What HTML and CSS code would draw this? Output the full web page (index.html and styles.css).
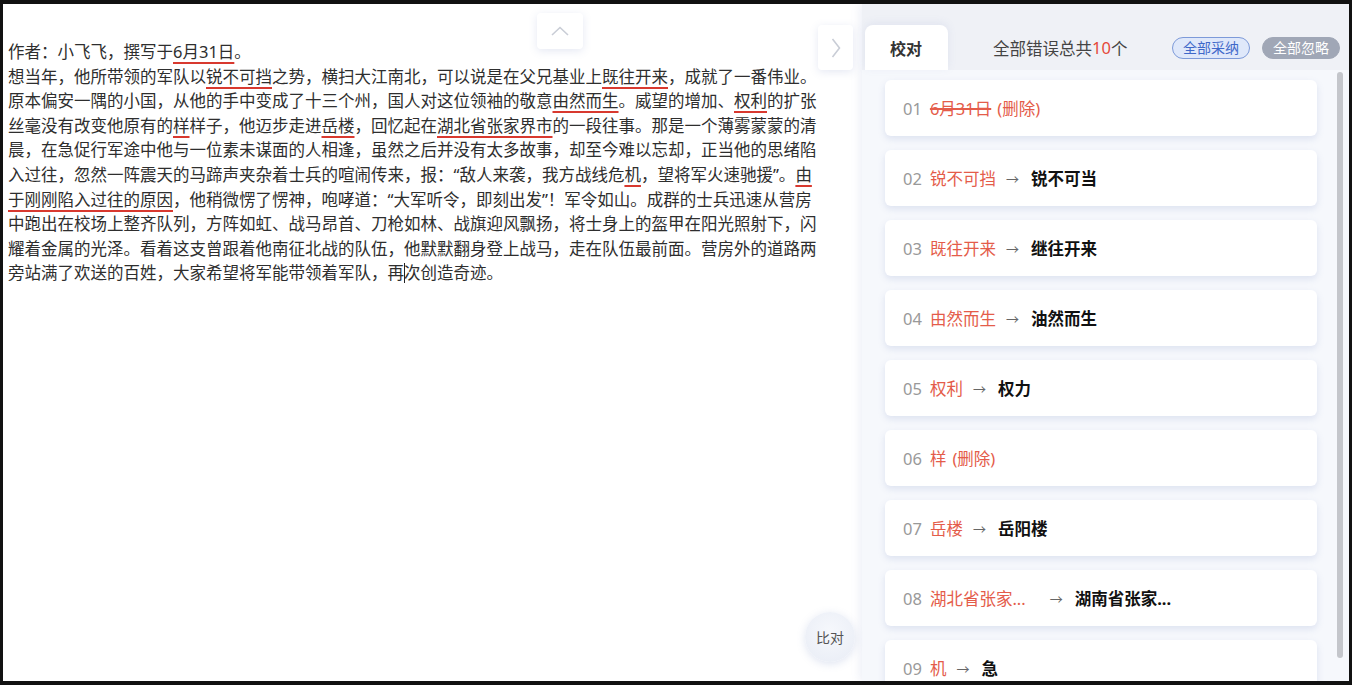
FILE: index.html
```html
<!DOCTYPE html>
<html lang="zh-CN">
<head>
<meta charset="utf-8">
<title>校对</title>
<link rel="stylesheet" href="styles.css">
</head>
<body>
<div class="frame">
  <section class="editor">
    <p class="doc">作者：小飞飞，撰写于<span class="err-u">6月31日</span>。<br>想当年，他所带领的军队以<span class="err-u">锐不可挡</span>之势，横扫大江南北，可以说是在父兄基业上<span class="err-u">既往开来</span>，成就了一番伟业。原本偏安一隅的小国，从他的手中变成了十三个州，国人对这位领袖的敬意<span class="err-u">由然而生</span>。威望的增加、<span class="err-u">权利</span>的扩张丝毫没有改变他原有的<span class="err-u">样</span>样子，他迈步走进<span class="err-u">岳楼</span>，回忆起在<span class="err-u">湖北省张家界市</span>的一段往事。那是一个薄雾蒙蒙的清晨，在急促行军途中他与一位素未谋面的人相逢，虽然之后并没有太多故事，却至今难以忘却，正当他的思绪陷入过往，忽然一阵震天的马蹄声夹杂着士兵的喧闹传来，报：“敌人来袭，我方战线危<span class="err-u">机</span>，望将军火速驰援”。<span class="err-u">由于刚刚陷入过往的原因</span>，他稍微愣了愣神，咆哮道：“大军听令，即刻出发”！军令如山。成群的士兵迅速从营房中跑出在校场上整齐队列，方阵如虹、战马昂首、刀枪如林、战旗迎风飘扬，将士身上的盔甲在阳光照射下，闪耀着金属的光泽。看着这支曾跟着他南征北战的队伍，他默默翻身登上战马，走在队伍最前面。营房外的道路两旁站满了欢送的百姓，大家希望将军能带领着军队，再<span class="caret"></span>次创造奇迹。</p>
    <button class="up" aria-label="上一个">
      <svg width="18" height="10" viewBox="0 0 18 10"><path d="M1 9 L9 1.5 L17 9" fill="none" stroke="#c9cdd6" stroke-width="1.6"/></svg>
    </button>
    <button class="next" aria-label="收起">
      <svg width="10" height="20" viewBox="0 0 10 20"><path d="M1.5 1 L8.5 10 L1.5 19" fill="none" stroke="#c9cdd6" stroke-width="1.6"/></svg>
    </button>
    <button class="compare">比对</button>
  </section>
  <aside class="side">
    <div class="side-head">
      <div class="tab">校对</div>
      <div class="title">全部错误总共<span class="red">10</span>个</div>
      <div class="actions">
        <button class="pill accept">全部采纳</button>
        <button class="pill ignore">全部忽略</button>
      </div>
    </div>
    <div class="list">
      <div class="cards">
        <div class="card"><span class="no">01</span><span class="err strike">6月31日</span><span class="err">(删除)</span></div>
        <div class="card"><span class="no">02</span><span class="err">锐不可挡</span><span class="arr">→</span><span class="fix">锐不可当</span></div>
        <div class="card"><span class="no">03</span><span class="err">既往开来</span><span class="arr">→</span><span class="fix">继往开来</span></div>
        <div class="card"><span class="no">04</span><span class="err">由然而生</span><span class="arr">→</span><span class="fix">油然而生</span></div>
        <div class="card"><span class="no">05</span><span class="err">权利</span><span class="arr">→</span><span class="fix">权力</span></div>
        <div class="card"><span class="no">06</span><span class="err">样</span><span class="err">(删除)</span></div>
        <div class="card"><span class="no">07</span><span class="err">岳楼</span><span class="arr">→</span><span class="fix">岳阳楼</span></div>
        <div class="card"><span class="no">08</span><span class="err wide">湖北省张家...</span><span class="arr">→</span><span class="fix">湖南省张家...</span></div>
        <div class="card"><span class="no">09</span><span class="err">机</span><span class="arr">→</span><span class="fix">急</span></div>
      </div>
      <div class="scroll"><div class="thumb"></div></div>
    </div>
  </aside>
</div>
</body>
</html>
```
FILE: styles.css
```css
* { box-sizing: border-box; }
html, body { margin: 0; padding: 0; background: #fff; }
body {
  font-family: "Noto Sans", "Noto Sans CJK SC", sans-serif;
  color: #333;
}
button { font-family: inherit; cursor: pointer; }

.frame {
  width: 1352px;
  height: 685px;
  border: 3px solid #111;
  border-top-width: 4px;
  border-bottom-width: 4px;
  display: flex;
  overflow: hidden;
  background: #fff;
}

.editor {
  flex: 0 0 859px;
  position: relative;
  padding: 36px 0 0 5px;
}
.doc {
  margin: 0;
  width: 815px;
  font-size: 16.5px;
  line-height: 24.6px;
  color: #2e2e2e;
}
.err-u {
  text-decoration: underline;
  text-decoration-color: #d8392f;
  text-decoration-thickness: 2px;
  text-underline-offset: 4px;
}
.caret {
  display: inline-block;
  width: 0;
  height: 20px;
  border-left: 1px solid #222;
  margin-right: -1px;
  vertical-align: -4px;
}

.up {
  position: absolute;
  left: 534px;
  top: 9px;
  width: 46px;
  height: 36px;
  border: none;
  border-radius: 4px;
  background: #fff;
  box-shadow: 0 2px 8px rgba(110, 130, 190, 0.18);
  display: flex;
  align-items: center;
  justify-content: center;
  padding: 0;
}
.next {
  position: absolute;
  left: 815px;
  top: 21px;
  width: 35px;
  height: 45px;
  border: none;
  border-radius: 4px;
  background: #fff;
  box-shadow: 0 2px 8px rgba(110, 130, 190, 0.18);
  display: flex;
  align-items: center;
  justify-content: center;
  padding: 0;
}
.compare {
  position: absolute;
  left: 802px;
  top: 608px;
  width: 50px;
  height: 50px;
  border: none;
  border-radius: 50%;
  background: radial-gradient(circle at 50% 40%, #f6f8fc 0%, #e8ecf5 100%);
  box-shadow: 0 2px 8px rgba(110, 130, 190, 0.22);
  font-size: 14px;
  color: #555;
  padding: 0;
}

.side {
  flex: 1;
  display: flex;
  flex-direction: column;
  background: #f6f8fc;
  box-shadow: -3px 0 8px rgba(120, 140, 200, 0.12);
}
.side-head {
  height: 66px;
  flex: 0 0 66px;
  display: flex;
  align-items: flex-end;
  padding: 0 9px 0 3px;
  background: #eff1f6;
}
.tab {
  width: 83px;
  height: 45px;
  background: #fff;
  border-radius: 8px 8px 0 0;
  box-shadow: 0 -2px 8px rgba(120, 140, 200, 0.12);
  display: flex;
  align-items: center;
  padding-left: 25px;
  font-size: 16px;
  font-weight: 700;
  color: #333;
}
.title {
  height: 45px;
  display: flex;
  align-items: center;
  margin-left: 45px;
  font-size: 16.5px;
  color: #444;
}
.red { color: #e5493a; }
.actions {
  margin-left: auto;
  height: 45px;
  display: flex;
  align-items: center;
  gap: 12px;
}
.pill {
  height: 22px;
  padding: 0 10px;
  border-radius: 11px;
  font-size: 14px;
  line-height: 20px;
  white-space: nowrap;
}
.accept {
  background: #dfe8fa;
  border: 1px solid #7d9ad9;
  color: #3f68c9;
}
.ignore {
  background: #a0a7b6;
  border: 1px solid #a0a7b6;
  color: #fff;
}

.list {
  flex: 1;
  display: flex;
  overflow: hidden;
}
.cards {
  padding: 10px 0 0 23px;
  display: flex;
  flex-direction: column;
  gap: 14px;
}
.card {
  flex: 0 0 56px;
  width: 432px;
  height: 56px;
  background: #fff;
  border-radius: 6px;
  box-shadow: 0 3px 7px rgba(120, 140, 195, 0.2);
  display: flex;
  align-items: center;
  padding-left: 18px;
  font-size: 16.5px;
}
.no { color: #999; margin-right: 8px; }
.err { color: #e45c4a; margin-right: 10px; }
.err + .err { margin-left: -4px; }
.strike { text-decoration: line-through; text-decoration-thickness: 1.5px; }
.wide { margin-right: 24px; }
.arr { color: #666; font-size: 13px; margin-right: 12px; }
.fix { color: #111; font-weight: 700; }

.scroll {
  margin-left: auto;
  width: 12px;
  padding: 2px 6px 0 0;
}
.thumb {
  width: 6px;
  height: 586px;
  background: #c4c6cb;
  border-radius: 3px;
}
```
